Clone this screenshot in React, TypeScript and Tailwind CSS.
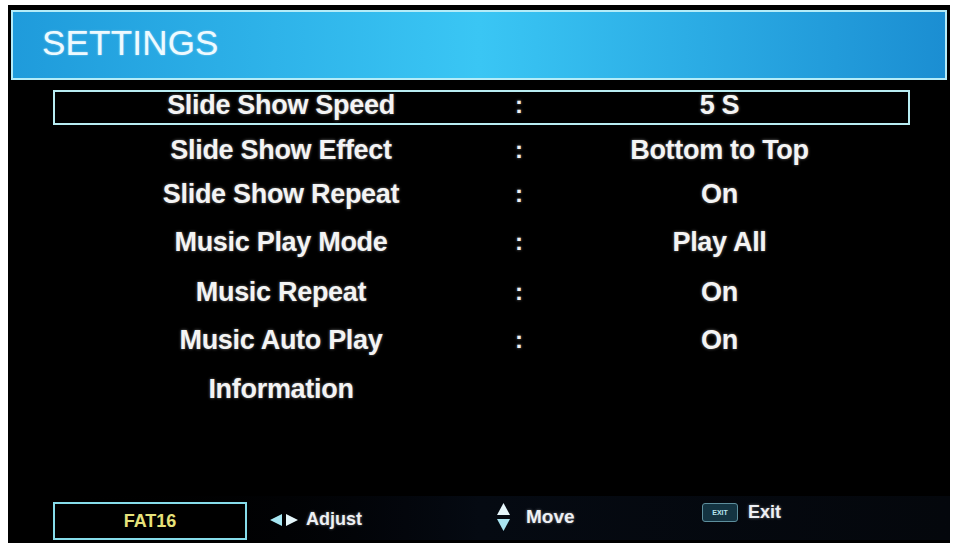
import React from "react"

const rows = [
  { label: "Slide Show Speed", value: "5 S", gap: "mt-0" },
  { label: "Slide Show Effect", value: "Bottom to Top", gap: "mt-[10px]" },
  { label: "Slide Show Repeat", value: "On", gap: "mt-[9px]" },
  { label: "Music Play Mode", value: "Play All", gap: "mt-[13px]" },
  { label: "Music Repeat", value: "On", gap: "mt-[15px]" },
  { label: "Music Auto Play", value: "On", gap: "mt-[13px]" },
  { label: "Information", value: null, gap: "mt-[14px]" },
]

const glow = "[text-shadow:0_0_3px_rgba(255,255,255,0.45)]"

export default function App() {
  return (
    <div className="w-[954px] h-[545px] bg-white overflow-hidden font-['Liberation_Sans',Arial,sans-serif]">
      <div className="ml-[8px] pt-[5px] w-[942px] h-[538px] mt-[5px] bg-black flex flex-col">
        {/* Header */}
        <div className="mx-[3px] h-[70px] border-2 border-[#b4ecf8] bg-gradient-to-r from-[#1f9bdb] via-[#3ac6f4] to-[#1b8ed2] flex items-center pl-[29px] pb-[4px]">
          <span className="text-[35px] text-[#eefaff] tracking-[0.2px] [text-shadow:0_0_2px_rgba(255,255,255,0.5)]">
            SETTINGS
          </span>
        </div>

        {/* Settings list */}
        <div className="ml-[45px] mt-[10px] w-[857px] flex flex-col">
          {rows.map((row, i) => (
            <div
              key={row.label}
              className={`${row.gap} h-[35px] flex items-center pb-[6px] border-2 ${
                i === 0 ? "border-[#b8ecf2]" : "border-transparent"
              }`}
            >
              <div className={`w-[452px] shrink-0 text-center text-[27px] leading-[30px] font-bold text-[#f4f4f4] tracking-[-0.3px] ${glow}`}>
                {row.label}
              </div>
              <div className={`w-[24px] shrink-0 text-center text-[24px] leading-[30px] font-bold text-[#f0f0f0] ${glow}`}>
                {row.value !== null ? ":" : ""}
              </div>
              <div className={`w-[377px] shrink-0 text-center text-[27px] leading-[30px] font-bold text-[#f4f4f4] tracking-[-0.3px] ${glow}`}>
                {row.value}
              </div>
            </div>
          ))}
        </div>

        {/* Bottom bar */}
        <div className="mt-auto mb-[3px] h-[44px] flex items-end bg-gradient-to-r from-black via-[#050a12] to-[#04070c]">
          <div className="ml-[45px] w-[194px] h-[38px] border-2 border-[#86dcea] bg-black flex items-center justify-center">
            <span className="text-[18px] font-bold text-[#e6e27a]">FAT16</span>
          </div>
          <div className="ml-[23px] w-[227px] h-[38px] flex items-center gap-[8px] pb-[3px]">
            <svg width="28" height="12" viewBox="0 0 28 12">
              <polygon points="0,6 12,0 12,12" fill="#a6e6f2" />
              <polygon points="28,6 16,0 16,12" fill="#e4f6fa" />
            </svg>
            <span className={`text-[18px] font-bold text-[#eef0f4] ${glow}`}>Adjust</span>
          </div>
          <div className="w-[205px] h-[38px] flex items-center gap-[16px] pb-[8px]">
            <svg width="13" height="28" viewBox="0 0 13 28">
              <polygon points="6.5,0 13,12 0,12" fill="#e6f6fb" />
              <polygon points="6.5,28 13,16 0,16" fill="#a8e4f0" />
            </svg>
            <span className={`text-[19px] font-bold text-[#eef0f4] ${glow}`}>Move</span>
          </div>
          <div className="h-[38px] flex items-start pt-[1px] gap-[10px]">
            <div className="w-[36px] h-[19px] rounded-[3px] border border-[#5d8e9c] bg-[#143442] flex items-center justify-center">
              <span className="text-[7px] font-bold text-[#b8e6f0] leading-none">EXIT</span>
            </div>
            <span className={`text-[18px] font-bold text-[#eef0f4] leading-[19px] ${glow}`}>Exit</span>
          </div>
        </div>
      </div>
    </div>
  )
}
